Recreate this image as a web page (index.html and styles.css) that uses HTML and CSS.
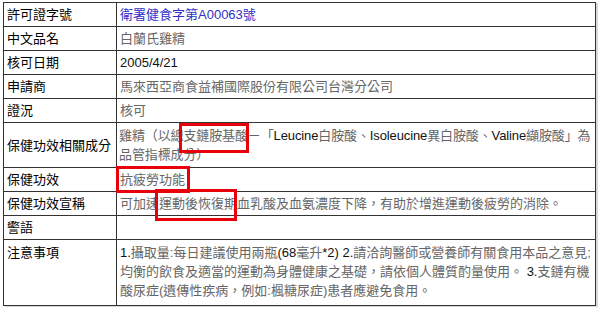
FILE: index.html
```html
<!DOCTYPE html>
<html lang="zh-Hant">
<head>
<meta charset="utf-8">
<link rel="stylesheet" href="styles.css">
</head>
<body>
<div class="wrap">
<table class="info">
<tr><th>許可證字號</th><td class="link">衛署健食字第A00063號</td></tr>
<tr><th>中文品名</th><td>白蘭氏雞精</td></tr>
<tr><th>核可日期</th><td class="dark">2005/4/21</td></tr>
<tr><th>申請商</th><td>馬來西亞商食益補國際股份有限公司台灣分公司</td></tr>
<tr><th>證況</th><td>核可</td></tr>
<tr class="tall"><th>保健功效相關成分</th><td class="tight">雞精（以總支鏈胺基酸－「<span class="dark">Leucine</span>白胺酸、<span class="dark">Isoleucine</span>異白胺酸、<span class="dark">Valine</span>纈胺酸」為<br>品管指標成分）</td></tr>
<tr><th>保健功效</th><td>抗疲勞功能</td></tr>
<tr><th>保健功效宣稱</th><td>可加速運動後恢復期血乳酸及血氨濃度下降，有助於增進運動後疲勞的消除。</td></tr>
<tr><th>警語</th><td></td></tr>
<tr class="last"><th>注意事項</th><td><span class="dark">1.</span>攝取量:每日建議使用兩瓶<span class="dark">(68</span>毫升<span class="dark">*2) 2.</span>請洽詢醫師或營養師有關食用本品之意見;<br>均衡的飲食及適當的運動為身體健康之基礎，請依個人體質酌量使用。 <span class="dark">3.</span>支鏈有機<br>酸尿症(遺傳性疾病，例如:楓糖尿症)患者應避免食用。</td></tr>
</table>
<div class="mark m1"></div>
<div class="mark m2"></div>
<div class="mark m3"></div>
</div>
</body>
</html>
```
FILE: styles.css
```css
html, body {
  margin: 0;
  padding: 0;
  background: #fff;
}
.wrap {
  position: relative;
  width: 600px;
  height: 309px;
  padding: 2px 0 0 3px;
  box-sizing: border-box;
}
.info {
  border-collapse: collapse;
  table-layout: fixed;
  width: 593px;
  font-family: "Liberation Sans", "Noto Sans CJK TC", sans-serif;
  font-size: 13px;
  line-height: 19px;
  box-shadow: 2px 1px 0 #d8d8d8;
}
.info th, .info td {
  border: 1px solid #333;
  padding: 2px 3px 2px 3px;
  text-align: left;
  vertical-align: top;
  white-space: nowrap;
  overflow: hidden;
}
.info th {
  width: 106px;
  font-weight: normal;
  color: #000;
  vertical-align: middle;
}
.info td {
  color: #666;
}
.info td.link {
  color: #3030c8;
}
.info td.tight {
  padding-left: 2px;
  padding-right: 0;
  letter-spacing: -0.12px;
}
.info tr.tall td {
  padding-top: 3px;
  padding-bottom: 3px;
}
.info .dark {
  color: #111;
}
.info tr.last td {
  padding-top: 3px;
  padding-bottom: 5px;
}
.info tr.last th {
  vertical-align: top;
  padding-top: 3px;
}
.mark {
  position: absolute;
  border: 3px solid #e8000b;
  box-sizing: border-box;
}
.m1 { left: 179px; top: 123px; width: 70px; height: 30px; }
.m2 { left: 116px; top: 166px; width: 74px; height: 27px; }
.m3 { left: 155px; top: 189px; width: 82px; height: 32px; }
```
